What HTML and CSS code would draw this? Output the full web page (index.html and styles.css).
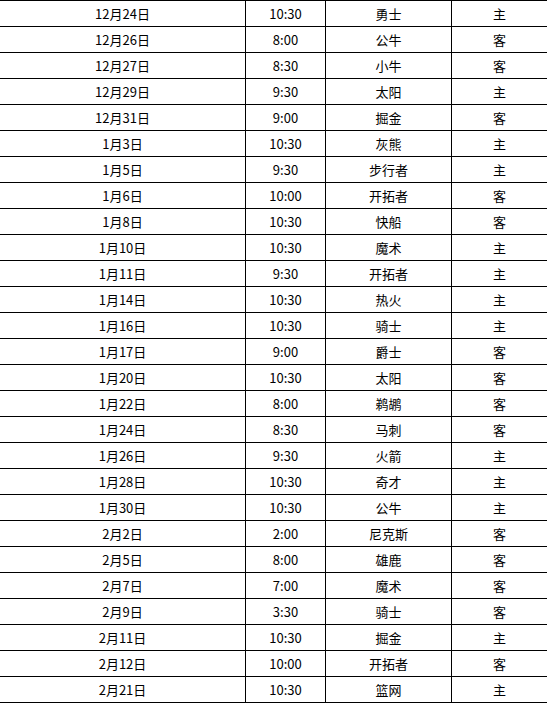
FILE: index.html
```html
<!DOCTYPE html>
<html lang="zh-CN">
<head>
<meta charset="utf-8">
<title>赛程</title>
<link rel="stylesheet" href="styles.css">
</head>
<body>
<table class="schedule">
<colgroup><col class="c-date"><col class="c-time"><col class="c-team"><col class="c-side"></colgroup>
<tbody>
<tr><td>12月24日</td><td>10:30</td><td>勇士</td><td>主</td></tr>
<tr><td>12月26日</td><td>8:00</td><td>公牛</td><td>客</td></tr>
<tr><td>12月27日</td><td>8:30</td><td>小牛</td><td>客</td></tr>
<tr><td>12月29日</td><td>9:30</td><td>太阳</td><td>主</td></tr>
<tr><td>12月31日</td><td>9:00</td><td>掘金</td><td>客</td></tr>
<tr><td>1月3日</td><td>10:30</td><td>灰熊</td><td>主</td></tr>
<tr><td>1月5日</td><td>9:30</td><td>步行者</td><td>主</td></tr>
<tr><td>1月6日</td><td>10:00</td><td>开拓者</td><td>客</td></tr>
<tr><td>1月8日</td><td>10:30</td><td>快船</td><td>客</td></tr>
<tr><td>1月10日</td><td>10:30</td><td>魔术</td><td>主</td></tr>
<tr><td>1月11日</td><td>9:30</td><td>开拓者</td><td>主</td></tr>
<tr><td>1月14日</td><td>10:30</td><td>热火</td><td>主</td></tr>
<tr><td>1月16日</td><td>10:30</td><td>骑士</td><td>主</td></tr>
<tr><td>1月17日</td><td>9:00</td><td>爵士</td><td>客</td></tr>
<tr><td>1月20日</td><td>10:30</td><td>太阳</td><td>客</td></tr>
<tr><td>1月22日</td><td>8:00</td><td>鹈鹕</td><td>客</td></tr>
<tr><td>1月24日</td><td>8:30</td><td>马刺</td><td>客</td></tr>
<tr><td>1月26日</td><td>9:30</td><td>火箭</td><td>主</td></tr>
<tr><td>1月28日</td><td>10:30</td><td>奇才</td><td>主</td></tr>
<tr><td>1月30日</td><td>10:30</td><td>公牛</td><td>主</td></tr>
<tr><td>2月2日</td><td>2:00</td><td>尼克斯</td><td>客</td></tr>
<tr><td>2月5日</td><td>8:00</td><td>雄鹿</td><td>客</td></tr>
<tr><td>2月7日</td><td>7:00</td><td>魔术</td><td>客</td></tr>
<tr><td>2月9日</td><td>3:30</td><td>骑士</td><td>客</td></tr>
<tr><td>2月11日</td><td>10:30</td><td>掘金</td><td>主</td></tr>
<tr><td>2月12日</td><td>10:00</td><td>开拓者</td><td>客</td></tr>
<tr><td>2月21日</td><td>10:30</td><td>篮网</td><td>主</td></tr>
</tbody>
</table>
</body>
</html>
```
FILE: styles.css
```css
html, body {
  margin: 0;
  padding: 0;
  background: #fff;
  overflow: hidden;
}
.schedule {
  width: 548px;
  table-layout: fixed;
  border-collapse: separate;
  border-spacing: 0;
  border-top: 1px solid #000;
  font-family: "Noto Sans CJK SC", "DejaVu Sans", sans-serif;
  font-size: 13px;
  color: #000;
}
.c-date { width: 246px; }
.c-time { width: 80px; }
.c-team { width: 126px; }
.c-side { width: 96px; }
.schedule td {
  box-sizing: content-box;
  height: 25px;
  padding: 0;
  line-height: 25px;
  text-align: center;
  border-right: 1px solid #000;
  border-bottom: 1px solid #000;
  white-space: nowrap;
  overflow: hidden;
}
```
